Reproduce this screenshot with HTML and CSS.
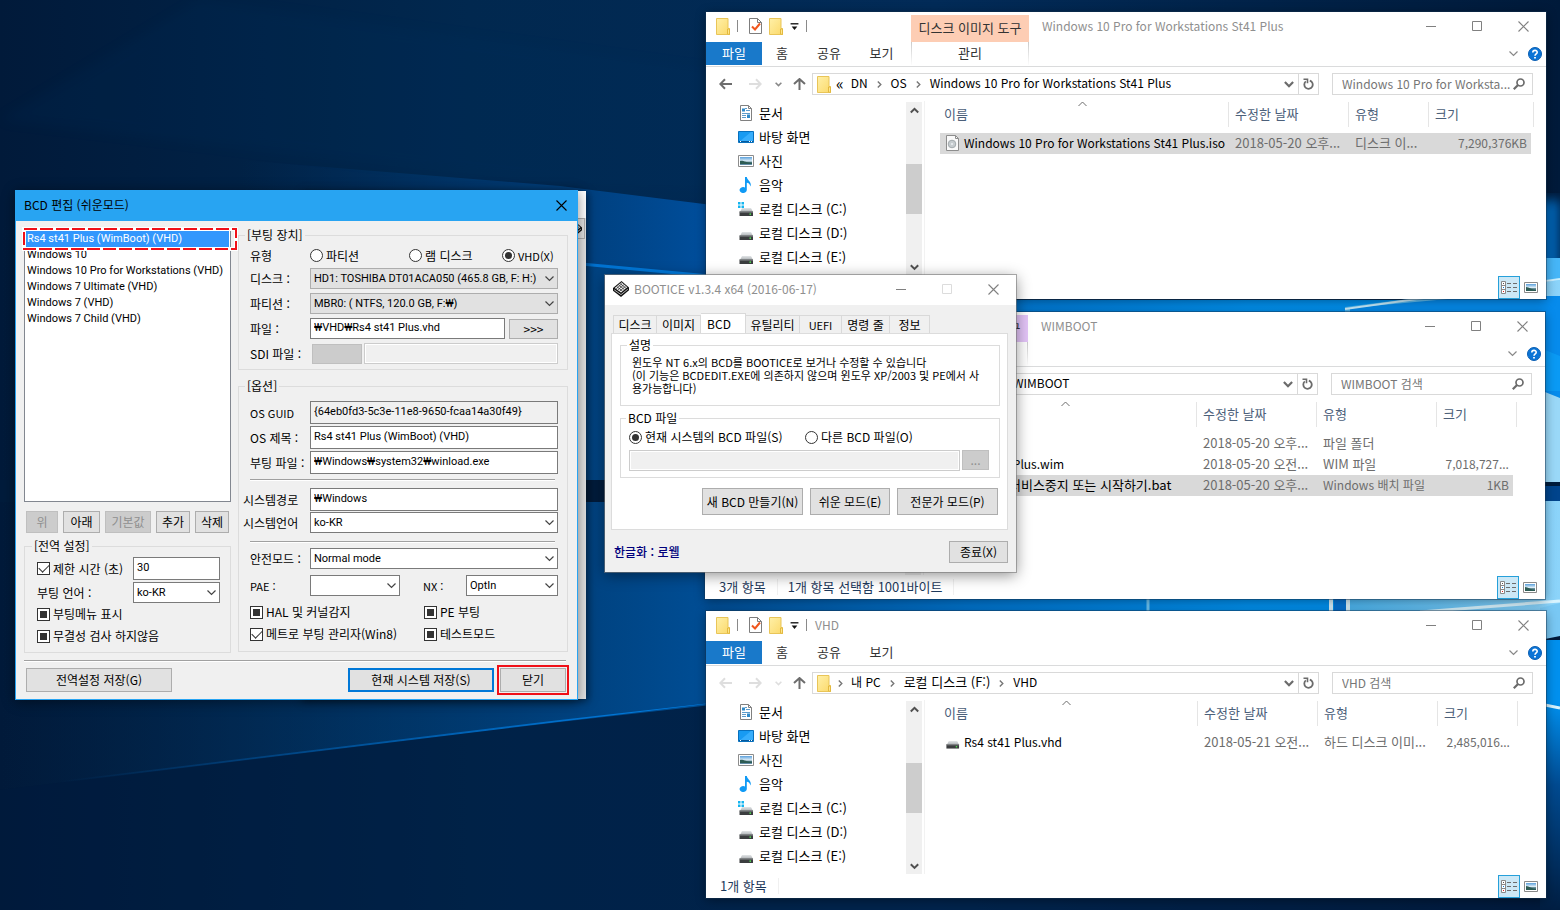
FILE: index.html
```html
<!DOCTYPE html>
<html lang="ko">
<head>
<meta charset="utf-8">
<title>BCD 편집</title>
<link rel="stylesheet" href="styles.css">
</head>
<body>
<svg class="defs" width="0" height="0" aria-hidden="true">
  <defs>
    <linearGradient id="g-folder" x1="0" y1="0" x2="1" y2="1"><stop offset="0" stop-color="#fff0a8"/><stop offset="1" stop-color="#fbd96a"/></linearGradient>
    <linearGradient id="g-drive" x1="0" y1="0" x2="0" y2="1"><stop offset="0" stop-color="#e3e6e8"/><stop offset="1" stop-color="#a9adb0"/></linearGradient>
    <linearGradient id="g-photo" x1="0" y1="0" x2="0" y2="1"><stop offset="0" stop-color="#5aa0dc"/><stop offset=".5" stop-color="#dcecf6"/><stop offset=".7" stop-color="#3d6b72"/><stop offset="1" stop-color="#6d96b5"/></linearGradient>
    <symbol id="i-folder" viewBox="0 0 14 17"><path d="M.5.5h11.500v10h1.500v6H.5z" fill="url(#g-folder)" stroke="#e9c558"/><path d="M11.500 16V11h2v5.500z" fill="#ffe68c" stroke="#e3b93f"/></symbol>
    <symbol id="i-check" viewBox="0 0 13 16"><path d="M.5.5h8l4 4v11H.5z" fill="#fff" stroke="#7d7d7d"/><path d="M8.500.5v4h4" fill="none" stroke="#7d7d7d"/><path d="M3 8.500l3 3 5-6" fill="none" stroke="#f0561d" stroke-width="2"/></symbol>
    <symbol id="i-qdrop" viewBox="0 0 8 6"><path d="M.5 0h7v1.200h-7z" fill="#111"/><path d="M1.500 3h5L4 6z" fill="#111"/></symbol>
    <symbol id="i-back" viewBox="0 0 13 11"><path d="M6 .8L1.300 5.500 6 10.200M1.500 5.500H13" fill="none" stroke="currentColor" stroke-width="2"/></symbol>
    <symbol id="i-fwd" viewBox="0 0 13 11"><path d="M7 .8l4.700 4.700L7 10.200M11.500 5.500H0" fill="none" stroke="currentColor" stroke-width="2"/></symbol>
    <symbol id="i-up" viewBox="0 0 13 12"><path d="M1 6l5.500-5L12 6M6.500 1.500V12" fill="none" stroke="currentColor" stroke-width="2"/></symbol>
    <symbol id="i-down" viewBox="0 0 9 6"><path d="M.8.800L4.500 4.500 8.200.8" fill="none" stroke="currentColor" stroke-width="2"/></symbol>
    <symbol id="i-thin" viewBox="0 0 9 6"><path d="M.5.500L4.500 4.500 8.500.5" fill="none" stroke="currentColor" stroke-width="1.200"/></symbol>
    <symbol id="i-thinup" viewBox="0 0 9 6"><path d="M.5 5L4.500 1 8.500 5" fill="none" stroke="currentColor"/></symbol>
    <symbol id="i-sbup" viewBox="0 0 9 7"><path d="M.8 5.500L4.500 1.800 8.200 5.500" fill="none" stroke="#505050" stroke-width="2"/></symbol>
    <symbol id="i-sbdown" viewBox="0 0 9 7"><path d="M.8 1.200L4.500 4.900 8.200 1.200" fill="none" stroke="#505050" stroke-width="2"/></symbol>
    <symbol id="i-sep" viewBox="0 0 5 7"><path d="M.8.500l3 3-3 3" fill="none" stroke="#777" stroke-width="1.400"/></symbol>
    <symbol id="i-refresh" viewBox="0 0 11 12"><path d="M6.800 2.600a4.200 4.200 0 1 1-4 .8" fill="none" stroke="#6b6b6b" stroke-width="1.800"/><path d="M.5 1.200h4v4" fill="none" stroke="#6b6b6b" stroke-width="1.600"/></symbol>
    <symbol id="i-search" viewBox="0 0 12 12"><circle cx="7.500" cy="4.500" r="3.500" fill="none" stroke="#6b6b6b" stroke-width="1.700"/><path d="M5 7L.8 11.200" stroke="#6b6b6b" stroke-width="2.200"/></symbol>
    <symbol id="i-help" viewBox="0 0 14 14"><circle cx="7" cy="7" r="6.500" fill="#0b74d6" stroke="#0a5eb2"/><path d="M4.800 5.500C4.800 2.700 9.200 2.800 9.200 5.300 9.200 6.900 7 6.900 7 8.800" fill="none" stroke="#fff" stroke-width="1.600"/><path d="M6.100 9.900h1.800v1.600H6.100z" fill="#fff"/></symbol>
    <symbol id="i-min" viewBox="0 0 11 11"><path d="M0 5.500h10" stroke="currentColor"/></symbol>
    <symbol id="i-max" viewBox="0 0 11 11"><path d="M.5.500h9v9H.5z" fill="none" stroke="currentColor"/></symbol>
    <symbol id="i-close" viewBox="0 0 11 11"><path d="M.5.500l10 10M10.500.500l-10 10" stroke="currentColor" stroke-width="1.100"/></symbol>
    <symbol id="i-doc" viewBox="0 0 16 16"><path d="M2.500.5h8l3 3v12h-11z" fill="#fff" stroke="#808080"/><path d="M10.500.5v3h3" fill="none" stroke="#808080"/><path d="M7 3.500h2M8 5.500h4M4 8.500h8M4 10.500h4M4 12.500h4" stroke="#5d9ccc"/><path d="M4 3.500h3v3H4zM9 9.500h3v3.500H9z" fill="#2f8ac9"/></symbol>
    <symbol id="i-desk" viewBox="0 0 16 16"><path d="M.5 2.500h15v11H.5z" fill="#189bf2" stroke="#0870bd"/><path d="M1 13L13 3h2v10z" fill="#37aefc"/><path d="M1 12.500h14" stroke="#06599b"/><path d="M2 12.500h1M11 12.500h1M13 12.500h1" stroke="#fff"/></symbol>
    <symbol id="i-photo" viewBox="0 0 16 16"><path d="M.5 2.500h15v11H.5z" fill="#fff" stroke="#8c8c8c"/><path d="M2 4h12v8H2z" fill="url(#g-photo)"/><path d="M2 8c3-1 6 2 12 2v1H2z" fill="#2d5c54"/></symbol>
    <symbol id="i-music" viewBox="0 0 16 16"><path d="M7 0h1.800c.4 3.500 5.200 4.500 3.700 9.500-.6-2.400-1.800-3.500-3.700-3.700V13a3.600 3 0 1 1-1.800-2.600z" fill="#0f9af5"/></symbol>
    <symbol id="i-drive" viewBox="0 0 16 16"><path d="M4 7h9l2 4H2z" fill="url(#g-drive)"/><path d="M1.500 10.500h13.500v4.500H1.500z" fill="#3b3d3f"/><path d="M1.500 10.500h13.500v1H1.500z" fill="#8b8e90"/><path d="M11.500 12.500h1.500v1.200h-1.500z" fill="#5f5"/></symbol>
    <symbol id="i-cdrive" viewBox="0 0 16 16"><path d="M0 1h2.500v2.500H0zM3.500 1H6v2.500H3.500zM0 4.500h2.500V7H0zM3.500 4.500H6V7H3.500z" fill="#15b5f0"/><use href="#i-drive"/></symbol>
    <symbol id="i-iso" viewBox="0 0 13 16"><path d="M.5.5h9l3 3v12H.5z" fill="#fafafa" stroke="#8d8d8d"/><path d="M9.500.5v3h3" fill="none" stroke="#8d8d8d"/><circle cx="6" cy="9" r="3.800" fill="#c6cccf" stroke="#a2a9ac"/><circle cx="6" cy="9" r="1" fill="#eef2f4"/></symbol>
    <symbol id="i-details" viewBox="0 0 16 13"><path d="M.5.500h4v12h-4zM.5 4.500h4M.5 8.500h4" fill="#fff" stroke="#888"/><path d="M2 2.500h1" stroke="#555"/><path d="M2 6.500h1" stroke="#0a7ad8"/><path d="M2 10.500h1" stroke="#d22"/><path d="M6 2.500h4M12 2.500h4M6 6.500h4M12 6.500h4M6 10.500h4M12 10.500h4" stroke="#6d6d6d"/></symbol>
    <symbol id="i-thumb" viewBox="0 0 14 11"><path d="M.5.500h13v10H.5z" fill="#fff" stroke="#8a8a8a"/><path d="M2 2h10v7H2z" fill="url(#g-photo)"/><path d="M2 5c3 0 6 3 10 3v1H2z" fill="#2d5c54"/></symbol>
    <symbol id="i-boot" viewBox="0 0 16 16"><path d="M8.500 0L16 6.500v2.800L8 16 0 9.800V7z" fill="#111"/><path d="M8.500 1.200l5.800 5-6.300 5.300-6.300-4.500z" fill="#f0f0f0"/><path d="M3.800 5.600l5.800 4.600M5.600 4l5.800 4.600M7.200 2.600l5.800 4.600M6.500 10.300l6-5M4.800 9l6-5.200M3.200 7.800l6-5.400" stroke="#222" stroke-width=".7"/><path d="M1.200 8.800L8 13.600l6.800-5.400" fill="none" stroke="#ddd" stroke-width=".8"/></symbol>
  </defs>
</svg>

<main class="desktop">
  <svg class="wallpaper" viewBox="0 0 1560 910" preserveAspectRatio="none" aria-hidden="true">
    <defs>
      <linearGradient id="w-base" x1="0" y1="0" x2="1" y2="0"><stop offset="0" stop-color="#011a3a"/><stop offset=".3" stop-color="#01284f"/><stop offset=".6" stop-color="#022b58"/><stop offset="1" stop-color="#001a3a"/></linearGradient>
      <linearGradient id="w-beam" x1="0" y1="0" x2="1" y2="0"><stop offset="0" stop-color="#01254b" stop-opacity="0"/><stop offset=".25" stop-color="#003a70" stop-opacity=".7"/><stop offset=".45" stop-color="#004d94"/><stop offset=".62" stop-color="#0073cc"/><stop offset=".8" stop-color="#008fec"/><stop offset="1" stop-color="#0094f4"/></linearGradient>
      <linearGradient id="w-beam2" x1="0" y1="0" x2="1" y2="0"><stop offset="0" stop-color="#003367" stop-opacity="0"/><stop offset=".6" stop-color="#003f7c" stop-opacity=".8"/><stop offset="1" stop-color="#0050a0"/></linearGradient>
      <linearGradient id="w-line" x1="0" y1="0" x2="1" y2="0"><stop offset="0" stop-color="#0075d8" stop-opacity="0"/><stop offset="1" stop-color="#0080e6"/></linearGradient>
      <linearGradient id="w-pane" x1="0" y1="0" x2="1" y2="0"><stop offset="0" stop-color="#4cb4ee"/><stop offset="1" stop-color="#8cd4fa"/></linearGradient>
      <linearGradient id="w-fall" x1="0" y1="0" x2="0" y2="1"><stop offset="0" stop-color="#0090ee"/><stop offset=".4" stop-color="#004a90"/><stop offset="1" stop-color="#001e42"/></linearGradient>
      <filter id="w-soft" x="-10%" y="-10%" width="120%" height="120%"><feGaussianBlur stdDeviation="6"/></filter>
    </defs>
    <path d="M0 0h1560v910H0z" fill="url(#w-base)"/>
    <path d="M200 0L710 70V190L560 186 0 120z" fill="#003466" opacity=".12" filter="url(#w-soft)"/>
    <path d="M240 160L560 186 720 206V280L560 262 240 225z" fill="url(#w-beam2)"/>
    <path d="M0 225L560 262 1000 300H1560V480H0z" fill="url(#w-beam)"/>
    <path d="M0 480h1560v22H0z" fill="#001c3c"/>
    <path d="M0 502h1560v130L706 704 0 790z" fill="url(#w-beam)"/>
    <path d="M100 232L560 262 720 277" fill="none" stroke="url(#w-line)" stroke-width="3"/>
    <path d="M60 782L560 721 720 703" fill="none" stroke="url(#w-line)" stroke-width="2"/>
    <path d="M0 790L706 704 1560 632V910H0z" fill="#001b3d" opacity=".45"/>
    <path d="M1530 200h30v70h-30z" fill="#0064b4" filter="url(#w-soft)"/>
    <path d="M1540 258h20v26l-20-4z" fill="#46b6f8"/>
    <path d="M1345 312V307L1560 280V480H1345z" fill="url(#w-pane)"/>
    <path d="M1350 308L1480 296H1560V400H1350z" fill="#068bec"/>
    <path d="M1345 309L1560 279" stroke="#c9efff" stroke-width="2"/>
    <path d="M1540 348l20 8v35h-20z" fill="#0a9af4"/>
    <path d="M1540 390l20 8v84h-20z" fill="#9ad8f8"/>
    <path d="M1540 486h20v15h-20z" fill="#01448c"/>
    <path d="M1346 501h214v112H1346z" fill="url(#w-pane)"/>
    <path d="M1540 608l20-5v33l-20 4z" fill="#79c8f4"/>
    <path d="M1540 640h20v62h-20z" fill="#0090ee"/>
    <path d="M1540 702h20v208h-20z" fill="url(#w-fall)"/>
    <path d="M1540 704l20 4M1420 612L1560 601" stroke="#d8f4ff" stroke-width="3"/>
    <path d="M1148 598v14" stroke="#6cc4f4" stroke-width="3"/>
    <path d="M1331 598v14M1348 598v14" stroke="#d8f0fb" stroke-width="4"/>
    <path d="M1334 598h12v14h-12z" fill="#0571d2"/>
  </svg>

  <section class="explorer win-iso" aria-label="Windows 10 Pro for Workstations St41 Plus">
    <header class="ex-title">
      <div class="qat"><svg class="fold"><use href="#i-folder"/></svg><i class="bar"></i><svg class="chk"><use href="#i-check"/></svg><svg class="fold"><use href="#i-folder"/></svg><svg class="qdrop"><use href="#i-qdrop"/></svg><i class="bar"></i></div>
      <span class="ctx peach">디스크 이미지 도구</span>
      <h2 class="ex-name">Windows 10 Pro for Workstations St41 Plus</h2>
      <div class="controls"><button aria-label="최소화"><svg><use href="#i-min"/></svg></button><button aria-label="최대화"><svg><use href="#i-max"/></svg></button><button aria-label="닫기"><svg><use href="#i-close"/></svg></button></div>
    </header>
    <nav class="ribbon"><button class="file">파일</button><button class="t-home">홈</button><button class="t-share">공유</button><button class="t-view">보기</button><button class="t-manage">관리</button><span class="grow"></span><svg class="expand"><use href="#i-thin"/></svg><svg class="help"><use href="#i-help"/></svg></nav>
    <div class="address">
      <button class="nb" aria-label="뒤로"><svg class="arrow"><use href="#i-back"/></svg></button><button class="nb dim" aria-label="앞으로"><svg class="arrow"><use href="#i-fwd"/></svg></button><button class="nb tiny" aria-label="최근"><svg class="recent"><use href="#i-down"/></svg></button><button class="nb up" aria-label="위로"><svg class="arrow"><use href="#i-up"/></svg></button>
      <div class="path"><svg class="fold"><use href="#i-folder"/></svg><span class="more">«</span><span>DN</span><svg class="sep"><use href="#i-sep"/></svg><span>OS</span><svg class="sep"><use href="#i-sep"/></svg><span>Windows 10 Pro for Workstations St41 Plus</span><span class="grow"></span><svg class="drop"><use href="#i-down"/></svg><button class="refresh" aria-label="새로 고침"><svg><use href="#i-refresh"/></svg></button></div>
      <label class="search"><input class="s-input" type="text" aria-label="검색" placeholder="Windows 10 Pro for Worksta..."><svg><use href="#i-search"/></svg></label>
    </div>
    <div class="ex-body">
      <ul class="tree"><li><svg><use href="#i-doc"/></svg>문서</li><li><svg><use href="#i-desk"/></svg>바탕 화면</li><li><svg><use href="#i-photo"/></svg>사진</li><li><svg><use href="#i-music"/></svg>음악</li><li><svg><use href="#i-cdrive"/></svg>로컬 디스크 (C:)</li><li><svg><use href="#i-drive"/></svg>로컬 디스크 (D:)</li><li><svg><use href="#i-drive"/></svg>로컬 디스크 (E:)</li></ul>
      <div class="scroll"><svg><use href="#i-sbup"/></svg><i class="thumb"></i><svg><use href="#i-sbdown"/></svg></div>
      <div class="files">
        <table class="list">
          <colgroup><col><col class="c-date"><col class="c-type80"><col class="c-size102"><col class="c-end3"></colgroup>
          <thead><tr><th>이름<svg class="sort"><use href="#i-thinup"/></svg></th><th>수정한 날짜</th><th>유형</th><th colspan="2">크기</th></tr></thead>
          <tbody><tr class="sel"><td class="fname"><svg class="iso"><use href="#i-iso"/></svg>Windows 10 Pro for Workstations St41 Plus.iso</td><td>2018-05-20 오후...</td><td>디스크 이...</td><td class="size">7,290,376KB</td><td class="void"></td></tr></tbody>
        </table>
      </div>
    </div>
    <footer class="status"><span class="grow"></span><button class="view on" aria-label="자세히"><svg class="v-det"><use href="#i-details"/></svg></button><button class="view" aria-label="큰 아이콘"><svg class="v-th"><use href="#i-thumb"/></svg></button></footer>
  </section>

  <section class="explorer win-wim" aria-label="WIMBOOT">
    <header class="ex-title">
      <div class="qat"></div>
      <span class="ctx violet">응용 프로그램 도구</span>
      <h2 class="ex-name">WIMBOOT</h2>
      <div class="controls"><button aria-label="최소화"><svg><use href="#i-min"/></svg></button><button aria-label="최대화"><svg><use href="#i-max"/></svg></button><button aria-label="닫기"><svg><use href="#i-close"/></svg></button></div>
    </header>
    <nav class="ribbon"><button class="file" aria-label="파일"></button><button class="t-home" aria-label="홈"></button><button class="t-share" aria-label="공유"></button><button class="t-view" aria-label="보기"></button><button class="t-manage" aria-label="관리"></button><span class="grow"></span><svg class="expand"><use href="#i-thin"/></svg><svg class="help"><use href="#i-help"/></svg></nav>
    <div class="address">
      <button class="nb" aria-label="뒤로"><svg class="arrow"><use href="#i-back"/></svg></button><button class="nb dim" aria-label="앞으로"><svg class="arrow"><use href="#i-fwd"/></svg></button><button class="nb tiny" aria-label="최근"><svg class="recent"><use href="#i-down"/></svg></button><button class="nb up" aria-label="위로"><svg class="arrow"><use href="#i-up"/></svg></button>
      <div class="path"><svg class="fold"><use href="#i-folder"/></svg><span class="deep">WIMBOOT</span><span class="grow"></span><svg class="drop"><use href="#i-down"/></svg><button class="refresh" aria-label="새로 고침"><svg><use href="#i-refresh"/></svg></button></div>
      <label class="search"><input class="s-input" type="text" aria-label="검색" placeholder="WIMBOOT 검색"><svg><use href="#i-search"/></svg></label>
    </div>
    <div class="ex-body">
      <ul class="tree"></ul>
      <div class="scroll"><svg><use href="#i-sbup"/></svg><i class="thumb"></i><svg><use href="#i-sbdown"/></svg></div>
      <div class="files narrow">
        <table class="list">
          <colgroup><col><col class="c-date"><col class="c-type120"><col class="c-size76"><col class="c-end4"></colgroup>
          <thead><tr><th aria-label="이름"><svg class="sort"><use href="#i-thinup"/></svg></th><th>수정한 날짜</th><th>유형</th><th colspan="2">크기</th></tr></thead>
          <tbody>
            <tr><td class="fname"><svg class="iso"><use href="#i-folder"/></svg></td><td>2018-05-20 오후...</td><td>파일 폴더</td><td></td><td class="void"></td></tr>
            <tr><td class="fname"><svg class="iso"><use href="#i-iso"/></svg>Rs4 st41 Plus.wim</td><td>2018-05-20 오전...</td><td>WIM 파일</td><td class="size">7,018,727...</td><td class="void"></td></tr>
            <tr class="sel"><td class="fname ko"><svg class="iso"><use href="#i-iso"/></svg>Wimlib 서비스중지 또는 시작하기.bat</td><td>2018-05-20 오후...</td><td class="lat">Windows 배치 파일</td><td class="size">1KB</td><td class="void"></td></tr>
          </tbody>
        </table>
      </div>
    </div>
    <footer class="status"><span class="cell">3개 항목</span><span class="cell">1개 항목 선택함 1001바이트</span><span class="grow"></span><button class="view on" aria-label="자세히"><svg class="v-det"><use href="#i-details"/></svg></button><button class="view" aria-label="큰 아이콘"><svg class="v-th"><use href="#i-thumb"/></svg></button></footer>
  </section>

  <section class="explorer win-vhd" aria-label="VHD">
    <header class="ex-title">
      <div class="qat short"><svg class="fold"><use href="#i-folder"/></svg><i class="bar"></i><svg class="chk"><use href="#i-check"/></svg><svg class="fold"><use href="#i-folder"/></svg><svg class="qdrop"><use href="#i-qdrop"/></svg><i class="bar"></i></div>
      <h2 class="ex-name flush">VHD</h2>
      <div class="controls"><button aria-label="최소화"><svg><use href="#i-min"/></svg></button><button aria-label="최대화"><svg><use href="#i-max"/></svg></button><button aria-label="닫기"><svg><use href="#i-close"/></svg></button></div>
    </header>
    <nav class="ribbon"><button class="file">파일</button><button class="t-home">홈</button><button class="t-share">공유</button><button class="t-view">보기</button><span class="grow"></span><svg class="expand"><use href="#i-thin"/></svg><svg class="help"><use href="#i-help"/></svg></nav>
    <div class="address">
      <button class="nb dim" aria-label="뒤로"><svg class="arrow"><use href="#i-back"/></svg></button><button class="nb dim" aria-label="앞으로"><svg class="arrow"><use href="#i-fwd"/></svg></button><button class="nb tiny dim" aria-label="최근"><svg class="recent"><use href="#i-down"/></svg></button><button class="nb up" aria-label="위로"><svg class="arrow"><use href="#i-up"/></svg></button>
      <div class="path"><svg class="fold"><use href="#i-folder"/></svg><svg class="sep"><use href="#i-sep"/></svg><span>내 PC</span><svg class="sep"><use href="#i-sep"/></svg><span class="ko">로컬 디스크 (F:)</span><svg class="sep"><use href="#i-sep"/></svg><span>VHD</span><span class="grow"></span><svg class="drop"><use href="#i-down"/></svg><button class="refresh" aria-label="새로 고침"><svg><use href="#i-refresh"/></svg></button></div>
      <label class="search"><input class="s-input" type="text" aria-label="검색" placeholder="VHD 검색"><svg><use href="#i-search"/></svg></label>
    </div>
    <div class="ex-body">
      <ul class="tree"><li><svg><use href="#i-doc"/></svg>문서</li><li><svg><use href="#i-desk"/></svg>바탕 화면</li><li><svg><use href="#i-photo"/></svg>사진</li><li><svg><use href="#i-music"/></svg>음악</li><li><svg><use href="#i-cdrive"/></svg>로컬 디스크 (C:)</li><li><svg><use href="#i-drive"/></svg>로컬 디스크 (D:)</li><li><svg><use href="#i-drive"/></svg>로컬 디스크 (E:)</li></ul>
      <div class="scroll"><svg><use href="#i-sbup"/></svg><i class="thumb"></i><svg><use href="#i-sbdown"/></svg></div>
      <div class="files narrow">
        <table class="list">
          <colgroup><col><col class="c-date"><col class="c-type120"><col class="c-size76"><col class="c-end4"></colgroup>
          <thead><tr><th>이름<svg class="sort"><use href="#i-thinup"/></svg></th><th>수정한 날짜</th><th>유형</th><th colspan="2">크기</th></tr></thead>
          <tbody><tr><td class="fname"><svg class="iso wide"><use href="#i-drive"/></svg>Rs4 st41 Plus.vhd</td><td>2018-05-21 오전...</td><td>하드 디스크 이미...</td><td class="size">2,485,016...</td><td class="void"></td></tr></tbody>
        </table>
      </div>
    </div>
    <footer class="status"><span class="cell">1개 항목</span><span class="grow"></span><button class="view on" aria-label="자세히"><svg class="v-det"><use href="#i-details"/></svg></button><button class="view" aria-label="큰 아이콘"><svg class="v-th"><use href="#i-thumb"/></svg></button></footer>
  </section>

  <section class="behind" aria-hidden="true"><div class="behind-title"></div><div class="behind-btn"><svg><use href="#i-boot"/></svg></div></section>

  <section class="bcd" aria-label="BCD 편집 (쉬운모드)">
    <header class="bcd-title"><h1>BCD 편집 (쉬운모드)</h1><button aria-label="닫기"><svg><use href="#i-close"/></svg></button></header>
    <div class="bcd-body">
      <div class="left">
        <ul class="entries"><li class="cur">Rs4 st41 Plus (WimBoot) (VHD)</li><li>Windows 10</li><li>Windows 10 Pro for Workstations (VHD)</li><li>Windows 7 Ultimate (VHD)</li><li>Windows 7 (VHD)</li><li>Windows 7 Child (VHD)</li></ul>
        <svg class="marker" viewBox="0 0 216 24" aria-hidden="true"><path d="M2 2h212v20H2z" fill="none" stroke="#fff" stroke-width="4"/><path d="M2 2h212v20H2z" fill="none" stroke="#f01018" stroke-width="2" stroke-dasharray="13 3"/></svg>
        <div class="ops"><button class="btn w32" disabled>위</button><button class="btn w37">아래</button><button class="btn w46" disabled>기본값</button><button class="btn w34">추가</button><button class="btn w34">삭제</button></div>
        <fieldset class="box global">
          <legend>[전역 설정]</legend>
          <div class="g-row tall"><label class="opt"><input type="checkbox" checked>제한 시간 (초)</label><input class="txt" type="text" value="30" aria-label="제한 시간"></div>
          <div class="g-row"><label for="lang">부팅 언어 :</label><span class="drop-wrap"><select id="lang" class="sel-box"><option>ko-KR</option></select><svg><use href="#i-thin"/></svg></span></div>
          <label class="opt g-opt"><input class="tri" type="checkbox">부팅메뉴 표시</label>
          <label class="opt g-opt"><input class="tri" type="checkbox">무결성 검사 하지않음</label>
        </fieldset>
      </div>
      <div class="right">
        <fieldset class="box device">
          <legend>[부팅 장치]</legend>
          <div class="kind"><span class="kind-l">유형</span><label class="opt k1"><input type="radio" name="kind">파티션</label><label class="opt k2"><input type="radio" name="kind">램 디스크</label><label class="opt"><input type="radio" name="kind" checked><span class="lat11">VHD(X)</span></label></div>
          <div class="f-row"><label for="disk">디스크 :</label><span class="drop-wrap"><select id="disk" class="sel-box gray"><option>HD1: TOSHIBA DT01ACA050 (465.8 GB, F: H:)</option></select><svg><use href="#i-thin"/></svg></span></div>
          <div class="f-row"><label for="part">파티션 :</label><span class="drop-wrap"><select id="part" class="sel-box gray"><option>MBR0: ( NTFS, 120.0 GB, F:₩)</option></select><svg><use href="#i-thin"/></svg></span></div>
          <div class="f-row"><label for="file">파일 :</label><input id="file" class="txt h21" type="text" value="₩VHD₩Rs4 st41 Plus.vhd"><button class="btn browse">&gt;&gt;&gt;</button></div>
          <div class="f-row"><label for="sdi">SDI 파일 :</label><button class="btn sdi" disabled aria-label="SDI 선택"></button><input id="sdi" class="txt h21 off" type="text" disabled></div>
        </fieldset>
        <fieldset class="box options">
          <legend>[옵션]</legend>
          <div class="f-row"><label for="guid" class="lat11">OS GUID</label><input id="guid" class="txt ro" type="text" readonly value="{64eb0fd3-5c3e-11e8-9650-fcaa14a30f49}"></div>
          <div class="f-row"><label for="ost">OS 제목 :</label><input id="ost" class="txt" type="text" value="Rs4 st41 Plus (WimBoot) (VHD)"></div>
          <div class="f-row"><label for="bf">부팅 파일 :</label><input id="bf" class="txt" type="text" value="₩Windows₩system32₩winload.exe"></div>
          <hr class="rule r1">
          <div class="f-row sys"><label for="sp">시스템경로</label><input id="sp" class="txt" type="text" value="₩Windows"></div>
          <div class="f-row sys short-row"><label for="sl">시스템언어</label><span class="drop-wrap"><select id="sl" class="sel-box"><option>ko-KR</option></select><svg><use href="#i-thin"/></svg></span></div>
          <hr class="rule r2">
          <div class="f-row safe"><label for="sm">안전모드 :</label><span class="drop-wrap"><select id="sm" class="sel-box"><option>Normal mode</option></select><svg><use href="#i-thin"/></svg></span></div>
          <div class="f-row pae"><label for="pae" class="lat11">PAE :</label><span class="drop-wrap w90"><select id="pae" class="sel-box"><option></option></select><svg><use href="#i-thin"/></svg></span><label class="nx lat11" for="nx">NX :</label><span class="drop-wrap"><select id="nx" class="sel-box"><option>OptIn</option></select><svg><use href="#i-thin"/></svg></span></div>
          <div class="checks"><label class="opt"><input class="tri" type="checkbox">HAL 및 커널감지</label><label class="opt"><input class="tri" type="checkbox">PE 부팅</label><label class="opt"><input type="checkbox" checked>메트로 부팅 관리자(Win8)</label><label class="opt"><input class="tri" type="checkbox">테스트모드</label></div>
        </fieldset>
      </div>
    </div>
    <footer class="bcd-foot"><hr class="rule"><div class="foot-row"><button class="btn w146">전역설정 저장(G)</button><span class="grow"></span><button class="btn w146 primary">현재 시스템 저장(S)</button><button class="btn w66 flagged">닫기</button></div></footer>
  </section>

  <section class="bootice" aria-label="BOOTICE">
    <header class="bi-title"><svg class="logo"><use href="#i-boot"/></svg><h1>BOOTICE v1.3.4 x64 (2016-06-17)</h1><div class="controls"><button aria-label="최소화"><svg><use href="#i-min"/></svg></button><button class="faint" aria-label="최대화" disabled><svg><use href="#i-max"/></svg></button><button aria-label="닫기"><svg><use href="#i-close"/></svg></button></div></header>
    <div class="bi-body">
      <div class="tabs" role="tablist"><button role="tab" class="w44">디스크</button><button role="tab" class="w44">이미지</button><button role="tab" class="active">BCD</button><button role="tab" class="w54">유틸리티</button><button role="tab" class="w42 lat11">UEFI</button><button role="tab" class="w48">명령 줄</button><button role="tab" class="w40">정보</button></div>
      <div class="panel">
        <fieldset class="box desc"><legend>설명</legend><p>윈도우 NT 6.x의 BCD를 BOOTICE로 보거나 수정할 수 있습니다<br>(이 기능은 BCDEDIT.EXE에 의존하지 않으며 윈도우 XP/2003 및 PE에서 사<br>용가능합니다)</p></fieldset>
        <fieldset class="box bfile"><legend>BCD 파일</legend>
          <div class="radios"><label class="opt"><input type="radio" name="src" checked>현재 시스템의 BCD 파일(S)</label><label class="opt"><input type="radio" name="src">다른 BCD 파일(O)</label></div>
          <div class="pick"><input class="txt h21 off" type="text" disabled aria-label="BCD 파일 경로"><button class="btn dots" disabled>...</button></div>
        </fieldset>
        <div class="modes"><button class="btn w101">새 BCD 만들기(N)</button><button class="btn w80">쉬운 모드(E)</button><button class="btn w101">전문가 모드(P)</button></div>
      </div>
      <footer class="bi-foot"><span class="credit">한글화 : 로웰</span><button class="btn w59">종료(X)</button></footer>
    </div>
  </section>
</main>
</body>
</html>
```

FILE: styles.css
```css
*{box-sizing:border-box}
body{margin:0;font:12px/16px "Noto Sans CJK KR","Noto Sans",sans-serif;color:#000}
h1,h2,p,ul{margin:0;padding:0;font-size:12px;font-weight:400}
ul{list-style:none}
button,input,select{font:inherit;color:inherit;margin:0;padding:0;border:0;border-radius:0;background:none;outline:0}
svg{display:block;flex:none}
.defs{position:absolute}
.grow{flex:1}
.desktop{position:relative;min-height:100vh;overflow:hidden;background:#01244a}
.wallpaper{position:absolute;inset:0;width:100%;height:100%}

/* file explorer windows */
.explorer{position:absolute;width:840px;background:#fff;box-shadow:0 0 0 1px rgba(20,50,80,.45),0 2px 10px rgba(0,0,0,.4);font-size:13px;display:flex;flex-direction:column}
.win-iso{left:706px;top:12px}
.win-wim{left:705px;top:312px}
.win-vhd{left:706px;top:611px}
.ex-title{display:flex;height:30px}
.qat{width:205px;height:28px;display:flex;align-items:center;padding-left:10px;gap:7px}
.qat.short{width:auto}
.fold{width:14px;height:17px}
.chk{width:13px;height:16px}
.bar{width:1px;height:12px;background:#8a8a8a;margin-right:4px}
.qdrop{width:9px;height:7px}
.qat .bar:last-child{margin:0}
.ctx{width:118px;margin-top:3px;line-height:25px;text-align:center;color:#333}
.peach{background:#fdcdb4}
.violet{background:#e3c4f7}
.ex-name{flex:1;padding-left:13px;line-height:28px;color:#8f8f8f}
.ex-name.flush{padding-left:8px}
.controls{display:flex;height:28px;color:#808080}
.controls button{width:46px;display:flex;align-items:center;justify-content:center}
.controls svg{width:11px;height:11px}
.ribbon{display:flex;height:25px;border-bottom:1px solid #dadbdc;align-items:stretch;color:#333;padding-right:4px}
.ribbon button{line-height:21px;height:23px;padding-bottom:2px}
.ribbon .file{width:56px;background:#1979ca;color:#fff}
.t-home{width:40px}
.t-share{width:54px}
.t-view{width:51px}
.ribbon .t-manage{width:118px;margin-left:4px;border:1px solid;border-width:0 1px;border-image:linear-gradient(#c8c8c8,#fff) 1}
.expand{width:9px;height:6px;color:#888;align-self:center;margin-right:10px}
.help{width:14px;height:14px;align-self:center}
.address{display:flex;height:34px;align-items:center;padding:0 13px 0 4px;font-size:12px}
.nb{width:30px;height:22px;display:flex;align-items:center;justify-content:center;color:#6d6d6d}
.nb.tiny{width:17px;color:#888}
.nb.up{width:24px}
.nb.dim{color:#dedede}
.arrow{width:13px;height:12px}
.recent{width:7px;height:5px}
.path{flex:1;display:flex;align-items:center;height:22px;border:1px solid #d9d9d9;padding-left:4px;margin:0 13px 0 1px}
.path span{line-height:18px;padding-bottom:2px}
.path .ko{font-size:13px}
.path .more{padding:0 7px 2px 5px;font-size:16px}
.path .deep{margin-left:183px}
.sep{width:5px;height:7px;margin:0 9px}
.fold+.sep{margin:0 8px 0 7px}
.drop{width:10px;height:7px;color:#6b6b6b;margin-right:4px}
.refresh{width:20px;height:20px;border-left:1px solid #d9d9d9;display:flex;align-items:center;justify-content:center}
.refresh svg{width:11px;height:12px}
.search{width:201px;height:22px;border:1px solid #d9d9d9;display:flex;align-items:center;padding:0 7px 0 9px}
.s-input{flex:1;min-width:0;height:18px;padding-bottom:2px;color:#767676}
.s-input::placeholder{color:#767676;opacity:1}
.search svg{width:12px;height:12px}
.ex-body{display:flex;height:174px}
.tree{width:200px;padding-left:32px;font-size:13px}
.tree li{height:24px;display:flex;align-items:center;gap:5px}
.tree svg{width:16px;height:16px}
.scroll{width:16px;margin-top:1px;background:#f0f0f0;display:flex;flex-direction:column;justify-content:space-between;align-items:center;padding:5px 0 4px}
.scroll svg{width:9px;height:7px}
.thumb{width:16px;height:50px;background:#cdcdcd}
.files{flex:1;margin-left:2px;border-left:1px solid #f2f2f2;padding:1px 12px 0 15px}
.files.narrow{padding-right:28px}
.list{width:100%;border-collapse:separate;border-spacing:0;table-layout:fixed}
.c-date,.c-type120{width:120px}
.c-type80{width:80px}
.c-size102{width:102px}
.c-size76{width:76px}
.c-end3{width:3px}
.c-end4{width:4px}
.list th{height:25px;padding:0 0 2px 6px;text-align:left;font-weight:400;color:#4c607a;border-right:1px solid #e5e5e5;position:relative}
.list th:first-child{padding-left:4px}
.sort{position:absolute;left:50%;top:-1px;width:9px;height:6px;margin-left:-6px;color:#6d6d6d}
.list thead::after{content:"";display:block;height:6px}
.list td{height:21px;padding:0 0 1px 6px;color:#6d6d6d;white-space:nowrap;overflow:hidden}
.list td.fname{padding-left:24px;color:#000;font-size:12px;position:relative}
.list td.ko{font-size:13px}
.list td.lat{font-size:12px}
.list td.size{text-align:right;padding:0 4px 1px 0;font-size:12px}
.list td.void{background:#fff;padding:0}
.sel td{background:#d9d9d9}
.iso{position:absolute;left:6px;top:2px;width:13px;height:16px}
.iso.wide{left:5px;width:15px}
.status{display:flex;height:24px;align-items:center;padding:0 4px 0 14px;color:#1e395b}
.cell{padding-right:11px;margin-right:10px;border-right:1px solid #f0f0f0}
.view{width:22px;height:23px;display:flex;align-items:center;justify-content:center}
.view.on{background:#cce8f6;border:1px solid #26a0da}
.v-det{width:16px;height:13px}
.v-th{width:14px;height:11px}

/* shared dialog controls */
.btn{height:22px;background:#e1e1e1;border:1px solid #adadad;line-height:18px;text-align:center;white-space:nowrap}
.btn:disabled{background:#ccc;border-color:#bfbfbf;color:#8f8f8f}
.box{margin:0;min-width:0;border:1px solid #dcdcdc;padding:0}
.box legend{margin-left:-5px;padding:0 2px;line-height:14px;height:14px}
.txt{flex:1;min-width:0;width:100%;height:23px;padding:0 0 2px 3px;border:1px solid #7a7a7a;background:#fff;font:11px/18px Roboto,"Noto Sans CJK KR",sans-serif}
.h21{height:21px}
.ro{background:#f0f0f0}
.off{background:#f0f0f0;border:1px solid #ccc;box-shadow:inset 0 0 0 1px #fff}
.drop-wrap{position:relative;flex:1;min-width:0;display:flex}
.drop-wrap svg{position:absolute;right:4px;top:8px;width:9px;height:6px;color:#444}
.sel-box{appearance:none;width:100%;height:21px;border:1px solid #7a7a7a;background:#fff;padding:0 0 0 3px;font:11px/18px Roboto,"Noto Sans CJK KR",sans-serif}
.gray{background:#e1e1e1;border-color:#adadad}
.opt{display:flex;align-items:center;gap:3px;white-space:nowrap}
.opt input{appearance:none;width:13px;height:13px;flex:none;border:1px solid #333;background:#fff;display:grid;place-items:center}
.opt input[type=radio]{border-radius:50%}
.opt input[type=radio]:checked::after{content:"";width:7px;height:7px;border-radius:50%;background:#333}
.opt input[type=checkbox]:checked::after{content:"";width:9px;height:5px;border:solid #333;border-width:0 0 1px 1px;transform:rotate(-45deg);margin-bottom:3px}
.opt input.tri::after{content:"";width:7px;height:7px;background:#333}
.rule{margin:0;border:0;height:2px;background:#a0a0a0;border-bottom:1px solid #fff}
.w32{width:32px}.w34{width:34px}.w37{width:37px}.w46{width:46px}.w59{width:59px}.w66{width:66px}.w80{width:80px}.w101{width:101px}.w146{width:146px}

/* window that shows behind the BCD editor */
.behind{position:absolute;left:300px;top:191px;width:286px;height:508px;background:#e2e2e2;box-shadow:2px 2px 8px rgba(0,0,0,.5)}
.behind-title{height:27px;background:#fff}
.behind-btn{width:285px;height:21px;border:1px solid #adadad;display:flex;justify-content:flex-end;align-items:center;padding-right:2px}
.behind-btn svg{width:16px;height:16px}

/* BCD editor */
.bcd{position:absolute;left:15px;top:190px;width:563px;background:#f0f0f0;border:1px solid #28a4f2;box-shadow:0 2px 12px rgba(0,0,0,.45)}
.bcd-title{display:flex;align-items:center;justify-content:space-between;height:30px;background:#28a4f2;padding:0 10px 2px 8px}
.bcd-title svg{width:11px;height:11px}
.bcd-body{display:grid;grid-template-columns:207px 1fr;gap:7px;padding:7px 9px 0 8px}
.left{position:relative;padding-top:1px}
.entries{height:273px;background:#fff;border:1px solid #828790;padding:1px;font:11px/16px Roboto,"Noto Sans CJK KR",sans-serif}
.entries li{padding-left:1px}
.cur{background:#3297fd;color:#fff}
.marker{position:absolute;left:-2px;top:-1px;width:216px;height:24px}
.ops{display:flex;justify-content:space-between;padding:0 2px;margin-top:9px}
.global{margin-top:6px;padding:4px 10px 5px 12px}
.g-row{display:flex;align-items:center;justify-content:space-between;height:21px}
.g-row.tall{height:23px;margin-bottom:2px}
.g-row .txt,.g-row .drop-wrap{flex:none;width:87px}
.g-opt{height:22px}
.device{padding:3px 9px 3px 11px}
.options{margin-top:9px;padding:7px 9px 6px 11px}
.kind{display:flex;align-items:center;height:21px}
.kind-l{width:60px}
.k1{width:99px}
.k2{width:93px}
.lat11{font-size:11px}
.f-row{display:flex;align-items:center;height:25px}
.f-row>label{width:60px;flex:none;white-space:nowrap}
.browse{width:49px;height:20px;margin-left:4px;flex:none;line-height:16px}
.sdi{width:50px;height:20px;margin:0 2px;flex:none}
.r1{margin:4px 3px 6px 0}
.r2{margin:8px 3px 4px 0}
.sys{margin-left:-7px}
.f-row.sys>label{width:67px}
.short-row{height:21px}
.safe{height:23px}
.pae{height:31px}
.w90{flex:none;width:90px}
.f-row>.nx{width:66px;padding-left:23px}
.checks{display:grid;grid-template-columns:174px 1fr;grid-auto-rows:22px}
.bcd-foot{padding:7px 11px 7px 8px}
.foot-row{display:flex;gap:6px;padding:6px 0 0 2px}
.foot-row .btn{height:24px}
.btn.primary{border:2px solid #0078d7}
.btn.flagged{outline:2px solid #f01018;outline-offset:1px}

/* BOOTICE */
.bootice{position:absolute;left:605px;top:275px;width:411px;background:#f0f0f0;box-shadow:0 0 0 1px rgba(120,120,120,.6),0 3px 14px rgba(0,0,0,.45)}
.bi-title{display:flex;align-items:center;height:30px;background:#fff;padding:0 0 2px 8px;color:#8f8f8f}
.bi-title h1{flex:1;padding-left:5px}
.logo{width:16px;height:16px}
.controls .faint{color:#dcdcdc}
.bi-body{padding:8px 8px 9px 6px}
.tabs{display:flex;align-items:flex-end;height:20px;padding-left:2px}
.tabs button{height:18px;border:1px solid #d9d9d9;border-bottom:0;border-left:0;line-height:16px;white-space:nowrap}
.tabs button:first-child{border-left:1px solid #d9d9d9}
.tabs .active{width:45px;height:20px;background:#fff;padding-right:8px}
.w44{width:44px}.w54{width:54px}.w42{width:42px}.w48{width:48px}.w40{width:40px}
.panel{background:#fff;border:1px solid #dcdcdc;padding:4px 7px 14px 8px}
.box.desc legend{margin-left:6px}
.desc p{padding:4px 0 10px 11px;font-size:11px;line-height:13px;white-space:nowrap}
.bfile{margin-top:5px;padding:2px 10px 6px 8px}
.box.bfile legend{margin-left:-3px}
.radios{display:grid;grid-template-columns:176px 1fr;height:20px;margin-bottom:3px}
.pick{display:flex;gap:2px}
.dots{width:27px;height:20px;line-height:14px}
.modes{display:flex;justify-content:flex-end;gap:7px;padding:10px 2px 0 0}
.modes .btn{height:27px}
.bi-foot{display:flex;justify-content:space-between;align-items:center;padding:11px 0 0 3px}
.credit{color:#00007c;font-weight:500}
```
